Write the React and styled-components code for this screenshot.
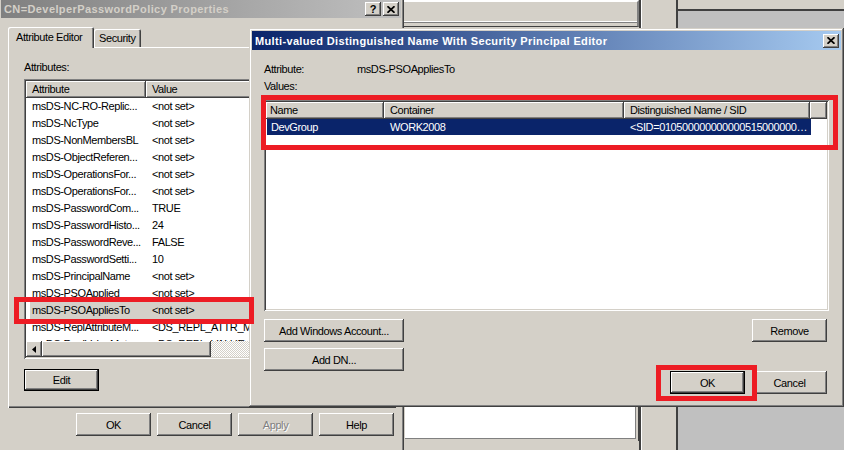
import styled, { createGlobalStyle, css } from "styled-components";

const GlobalStyle = createGlobalStyle`
  html, body {
    margin: 0;
    padding: 0;
  }
  body {
    background: #c0c0c0;
    font-family: "Liberation Sans", Arial, sans-serif;
    font-size: 11px;
    letter-spacing: -0.4px;
    color: #000;
  }
  * {
    box-sizing: border-box;
  }
`;

const raised = css`
  box-shadow:
    inset -1px -1px #404040,
    inset 1px 1px #ffffff,
    inset -2px -2px #808080;
`;

const sunken = css`
  box-shadow:
    inset 1px 1px #808080,
    inset -1px -1px #ffffff,
    inset 2px 2px #404040,
    inset -2px -2px #d4d0c8;
`;

const Desktop = styled.div`
  position: relative;
  width: 844px;
  height: 450px;
  overflow: hidden;
  background: #c0c0c0;
`;

/* ---------- window chrome ---------- */

const Window = styled.div`
  position: absolute;
  left: ${(p) => p.$left}px;
  top: ${(p) => p.$top}px;
  width: ${(p) => p.$width}px;
  height: ${(p) => p.$height}px;
  z-index: ${(p) => p.$z || 1};
  padding: 3px;
  background: #d4d0c8;
  box-shadow:
    inset -1px -1px #404040,
    inset 1px 1px #d4d0c8,
    inset -2px -2px #808080,
    inset 2px 2px #ffffff;
  display: flex;
  flex-direction: column;
  overflow: hidden;
`;

const TitleBar = styled.div`
  display: flex;
  align-items: center;
  justify-content: space-between;
  flex-shrink: 0;
  height: ${(p) => p.$h}px;
  padding: 0 2px 0 3px;
  background: ${(p) =>
    p.$active
      ? "linear-gradient(to right, #0a246a, #a6caf0)"
      : "linear-gradient(to right, #808080, #c0c0c0)"};
`;

const TitleText = styled.span`
  font-weight: bold;
  letter-spacing: ${(p) => (p.$active ? "0.35px" : "0.4px")};
  color: ${(p) => (p.$active ? "#ffffff" : "#d4d0c8")};
  white-space: nowrap;
`;

const CaptionButtons = styled.div`
  display: flex;
  gap: 2px;
`;

const CaptionButton = styled.div`
  width: 16px;
  height: 14px;
  display: flex;
  align-items: center;
  justify-content: center;
  background: #d4d0c8;
  font-weight: bold;
  font-size: 11px;
  letter-spacing: 0;
  ${raised}
`;

const CloseGlyph = () => (
  <svg width="8" height="7" viewBox="0 0 8 7">
    <path d="M0.5 0.2 L7.5 6.8 M7.5 0.2 L0.5 6.8" stroke="#000" strokeWidth="1.7" />
  </svg>
);

const Button = styled.button`
  display: flex;
  align-items: center;
  justify-content: center;
  width: ${(p) => p.$w || 75}px;
  height: ${(p) => p.$h || 23}px;
  padding: 0;
  border: none;
  flex-shrink: 0;
  background: #d4d0c8;
  font: inherit;
  letter-spacing: inherit;
  white-space: nowrap;
  color: ${(p) => (p.$disabled ? "#808080" : "#000")};
  text-shadow: ${(p) => (p.$disabled ? "1px 1px #ffffff" : "none")};
  box-shadow: ${(p) =>
    p.$default
      ? "inset 0 0 0 1px #000, inset -2px -2px #404040, inset 2px 2px #ffffff, inset -3px -3px #808080"
      : "inset -1px -1px #404040, inset 1px 1px #ffffff, inset -2px -2px #808080"};
`;

/* ---------- properties window ---------- */

const PropsBody = styled.div`
  display: flex;
  flex-direction: column;
  padding: 9px 6px 0 7px;
`;

const TabStrip = styled.div`
  display: flex;
  align-items: flex-end;
  height: 21px;
  position: relative;
  z-index: 1;
`;

const Tab = styled.div`
  width: ${(p) => p.$w}px;
  height: ${(p) => (p.$selected ? 21 : 18)}px;
  margin-bottom: ${(p) => (p.$selected ? 0 : 1)}px;
  padding-left: ${(p) => (p.$selected ? 8 : 5)}px;
  padding-bottom: ${(p) => (p.$selected ? 2 : 0)}px;
  display: flex;
  align-items: center;
  background: #d4d0c8;
  border-radius: 2px 2px 0 0;
  box-shadow:
    inset 1px 1px #ffffff,
    inset -1px 0 #404040,
    inset -2px 0 #808080;
`;

const TabPanel = styled.div`
  margin-top: -1px;
  width: 388px;
  height: 361px;
  padding: 14px 0 0 16px;
  background: #d4d0c8;
  box-shadow:
    inset 1px 1px #ffffff,
    inset -1px -1px #404040,
    inset -2px -2px #808080;
  display: flex;
  flex-direction: column;
  align-items: flex-start;
`;

const PanelLabel = styled.div`
  height: 13px;
  line-height: 13px;
  margin-bottom: 5px;
`;

const AttrList = styled.div`
  width: 362px;
  height: 280px;
  margin-bottom: 10px;
  padding: 2px;
  background: #ffffff;
  display: flex;
  flex-direction: column;
  ${sunken}
`;

const HeaderRow = styled.div`
  display: flex;
  flex-shrink: 0;
  height: 17px;
`;

const HeaderCell = styled.div`
  width: ${(p) => (p.$w ? `${p.$w}px` : "auto")};
  flex: ${(p) => (p.$w ? "0 0 auto" : "1")};
  padding-left: ${(p) => p.$pad || 6}px;
  line-height: 17px;
  background: #d4d0c8;
  white-space: nowrap;
  overflow: hidden;
  ${raised}
`;

const RowsViewport = styled.div`
  flex: 1;
  overflow: hidden;
`;

const AttrRow = styled.div`
  display: flex;
  height: 17px;
  line-height: 17px;
  margin-left: 4px;
  white-space: nowrap;
  background: ${(p) => (p.$selected ? "#d4d0c8" : "transparent")};
`;

const AttrName = styled.div`
  width: 116px;
  flex-shrink: 0;
  padding-left: 2px;
`;

/* the value column runs under the editor dialog, so it stops at its edge */
const AttrValue = styled.div`
  width: 105px;
  padding-left: 6px;
  overflow: hidden;
`;

const HScroll = styled.div`
  display: flex;
  flex-shrink: 0;
  height: 16px;
`;

const ScrollArrow = styled.div`
  width: 16px;
  height: 16px;
  display: flex;
  align-items: center;
  justify-content: center;
  background: #d4d0c8;
  ${raised}
`;

const ScrollThumb = styled.div`
  width: 169px;
  background: #d4d0c8;
  ${raised}
`;

const ScrollTrack = styled.div`
  flex: 1;
  background: repeating-conic-gradient(#ffffff 0 25%, #d4d0c8 0 50%) 0 0 / 2px 2px;
`;

const ButtonRow = styled.div`
  display: flex;
  justify-content: flex-end;
  gap: 6px;
  width: 388px;
  margin-top: 5px;
  padding-right: 2px;
`;

/* ---------- background windows ---------- */

const BackPane = styled.div`
  position: absolute;
  left: 403px;
  top: 0;
  width: 274px;
  height: 450px;
  background: #d4d0c8;
  display: flex;
  box-shadow: inset 1px 0 #404040;
`;

const PaneColumn = styled.div`
  width: 236px;
  display: flex;
  flex-direction: column;
  justify-content: space-between;
  padding: 0 0 9px 1px;
`;

const TopField = styled.div`
  height: 27px;
  border-top: 2px solid #ffffff;
  border-right: 2px solid #808080;
  box-shadow: inset 0 -3px #d4d0c8, inset 0 -4px #808080, inset 0 -5px #ffffff;
  border-bottom: 1px solid #404040;
`;

const WhiteField = styled.div`
  height: 34px;
  margin-left: 1px;
  background: #ffffff;
  box-shadow: inset -2px -2px #d4d0c8, inset -3px -3px #808080;
  border-right: 1px solid #404040;
`;

const PaneStrip = styled.div`
  flex: 1;
  border-left: 2px solid #404040;
  border-right: 1px solid #404040;
  box-shadow: inset 1px 0 #ffffff;
`;

const RightPane = styled.div`
  position: absolute;
  left: 677px;
  top: 0;
  width: 167px;
  height: 450px;
  background: #c0c0c0;
  border-left: 1px solid #404040;
`;

const RightStrip = styled.div`
  height: 11px;
  background: #d4d0c8;
  border-bottom: 2px solid #404040;
`;

/* ---------- principal editor dialog ---------- */

const DialogBody = styled.div`
  flex: 1;
  display: flex;
  flex-direction: column;
  padding: 13px 12px 10px 12px;
`;

const FieldRow = styled.div`
  display: flex;
  height: 13px;
  line-height: 13px;
  margin-top: ${(p) => p.$gap || 0}px;
  white-space: nowrap;
`;

const FieldLabel = styled.span`
  width: 93px;
`;

const ValueList = styled.div`
  height: 211px;
  margin-top: 7px;
  padding: 2px;
  background: #ffffff;
  display: flex;
  flex-direction: column;
  ${sunken}
`;

const ValueRow = styled.div`
  display: flex;
  width: 544px;
  height: 16px;
  line-height: 16px;
  margin-left: 1px;
  white-space: nowrap;
  color: ${(p) => (p.$selected ? "#ffffff" : "#000")};
  background: ${(p) => (p.$selected ? "#0a246a" : "transparent")};
`;

const ValueCell = styled.div`
  width: ${(p) => p.$w}px;
  flex-shrink: 0;
  padding: 0 3px 0 ${(p) => p.$pad || 6}px;
  overflow: hidden;
  text-overflow: ellipsis;
`;

const ActionArea = styled.div`
  display: flex;
  justify-content: space-between;
  height: 75px;
  margin-top: 8px;
  padding-right: 2px;
`;

const ActionColumn = styled.div`
  display: flex;
  flex-direction: column;
  gap: 6px;
`;

const RightColumn = styled.div`
  display: flex;
  flex-direction: column;
  align-items: flex-end;
  justify-content: space-between;
`;

const DialogButtons = styled.div`
  display: flex;
  gap: 7px;
`;

/* ---------- callouts ---------- */

const Callout = styled.div`
  position: absolute;
  left: ${(p) => p.$left}px;
  top: ${(p) => p.$top}px;
  width: ${(p) => p.$width}px;
  height: ${(p) => p.$height}px;
  border: 5px solid #ed1c24;
  z-index: 10;
`;

const attributes = [
  ["msDS-NC-RO-Replic...", "<not set>"],
  ["msDS-NcType", "<not set>"],
  ["msDS-NonMembersBL", "<not set>"],
  ["msDS-ObjectReferen...", "<not set>"],
  ["msDS-OperationsFor...", "<not set>"],
  ["msDS-OperationsFor...", "<not set>"],
  ["msDS-PasswordCom...", "TRUE"],
  ["msDS-PasswordHisto...", "24"],
  ["msDS-PasswordReve...", "FALSE"],
  ["msDS-PasswordSetti...", "10"],
  ["msDS-PrincipalName", "<not set>"],
  ["msDS-PSOApplied", "<not set>"],
  ["msDS-PSOAppliesTo", "<not set>"],
  ["msDS-ReplAttributeM...", "<DS_REPL_ATTR_META_DATA>"],
  ["msDS-ReplValueMeta...", "<DS_REPL_VALUE_META_DATA>"],
];

const App = () => {
  return (
    <>
      <GlobalStyle />
      <Desktop>
        <BackPane>
          <PaneColumn>
            <TopField />
            <WhiteField />
          </PaneColumn>
          <PaneStrip />
        </BackPane>

        <RightPane>
          <RightStrip />
        </RightPane>

        <Window $left={-2} $top={-3} $width={406} $height={460} $z={2}>
          <TitleBar $h={18}>
            <TitleText>CN=DevelperPasswordPolicy Properties</TitleText>
            <CaptionButtons>
              <CaptionButton>?</CaptionButton>
              <CaptionButton>
                <CloseGlyph />
              </CaptionButton>
            </CaptionButtons>
          </TitleBar>
          <PropsBody>
            <TabStrip>
              <Tab $selected $w={86}>Attribute Editor</Tab>
              <Tab $w={47}>Security</Tab>
            </TabStrip>
            <TabPanel>
              <PanelLabel>Attributes:</PanelLabel>
              <AttrList>
                <HeaderRow>
                  <HeaderCell $w={120}>Attribute</HeaderCell>
                  <HeaderCell>Value</HeaderCell>
                </HeaderRow>
                <RowsViewport>
                  {attributes.map(([name, value], i) => (
                    <AttrRow key={i} $selected={name === "msDS-PSOAppliesTo"}>
                      <AttrName>{name}</AttrName>
                      <AttrValue>{value}</AttrValue>
                    </AttrRow>
                  ))}
                </RowsViewport>
                <HScroll>
                  <ScrollArrow>
                    <svg width="4" height="7" viewBox="0 0 4 7">
                      <path d="M4 0 L0 3.5 L4 7 Z" fill="#000" />
                    </svg>
                  </ScrollArrow>
                  <ScrollThumb />
                  <ScrollTrack />
                </HScroll>
              </AttrList>
              <Button $default $h={22}>Edit</Button>
            </TabPanel>
            <ButtonRow>
              <Button>OK</Button>
              <Button>Cancel</Button>
              <Button $disabled>Apply</Button>
              <Button>Help</Button>
            </ButtonRow>
          </PropsBody>
        </Window>

        <Window $left={249} $top={28} $width={595} $height={379} $z={3}>
          <TitleBar $active $h={19}>
            <TitleText $active>
              Multi-valued Distinguished Name With Security Principal Editor
            </TitleText>
            <CaptionButton>
              <CloseGlyph />
            </CaptionButton>
          </TitleBar>
          <DialogBody>
            <FieldRow>
              <FieldLabel>Attribute:</FieldLabel>
              <span>msDS-PSOAppliesTo</span>
            </FieldRow>
            <FieldRow $gap={4}>Values:</FieldRow>
            <ValueList>
              <HeaderRow>
                <HeaderCell $w={118} $pad={4}>Name</HeaderCell>
                <HeaderCell $w={240}>Container</HeaderCell>
                <HeaderCell $w={186}>Distinguished Name / SID</HeaderCell>
                <HeaderCell $w={17} />
              </HeaderRow>
              <ValueRow $selected>
                <ValueCell $w={117} $pad={4}>DevGroup</ValueCell>
                <ValueCell $w={240}>WORK2008</ValueCell>
                <ValueCell $w={187}>
                  {"<SID=010500000000000515000000A4C2F13B9E77D0526C1F8E44>"}
                </ValueCell>
              </ValueRow>
            </ValueList>
            <ActionArea>
              <ActionColumn>
                <Button $w={140}>Add Windows Account...</Button>
                <Button $w={140}>Add DN...</Button>
              </ActionColumn>
              <RightColumn>
                <Button>Remove</Button>
                <DialogButtons>
                  <Button $default>OK</Button>
                  <Button>Cancel</Button>
                </DialogButtons>
              </RightColumn>
            </ActionArea>
          </DialogBody>
        </Window>

        <Callout $left={14} $top={297} $width={240} $height={27} />
        <Callout $left={261} $top={95} $width={577} $height={55} />
        <Callout $left={656} $top={365} $width={101} $height={36} />
      </Desktop>
    </>
  );
};

export default App;
